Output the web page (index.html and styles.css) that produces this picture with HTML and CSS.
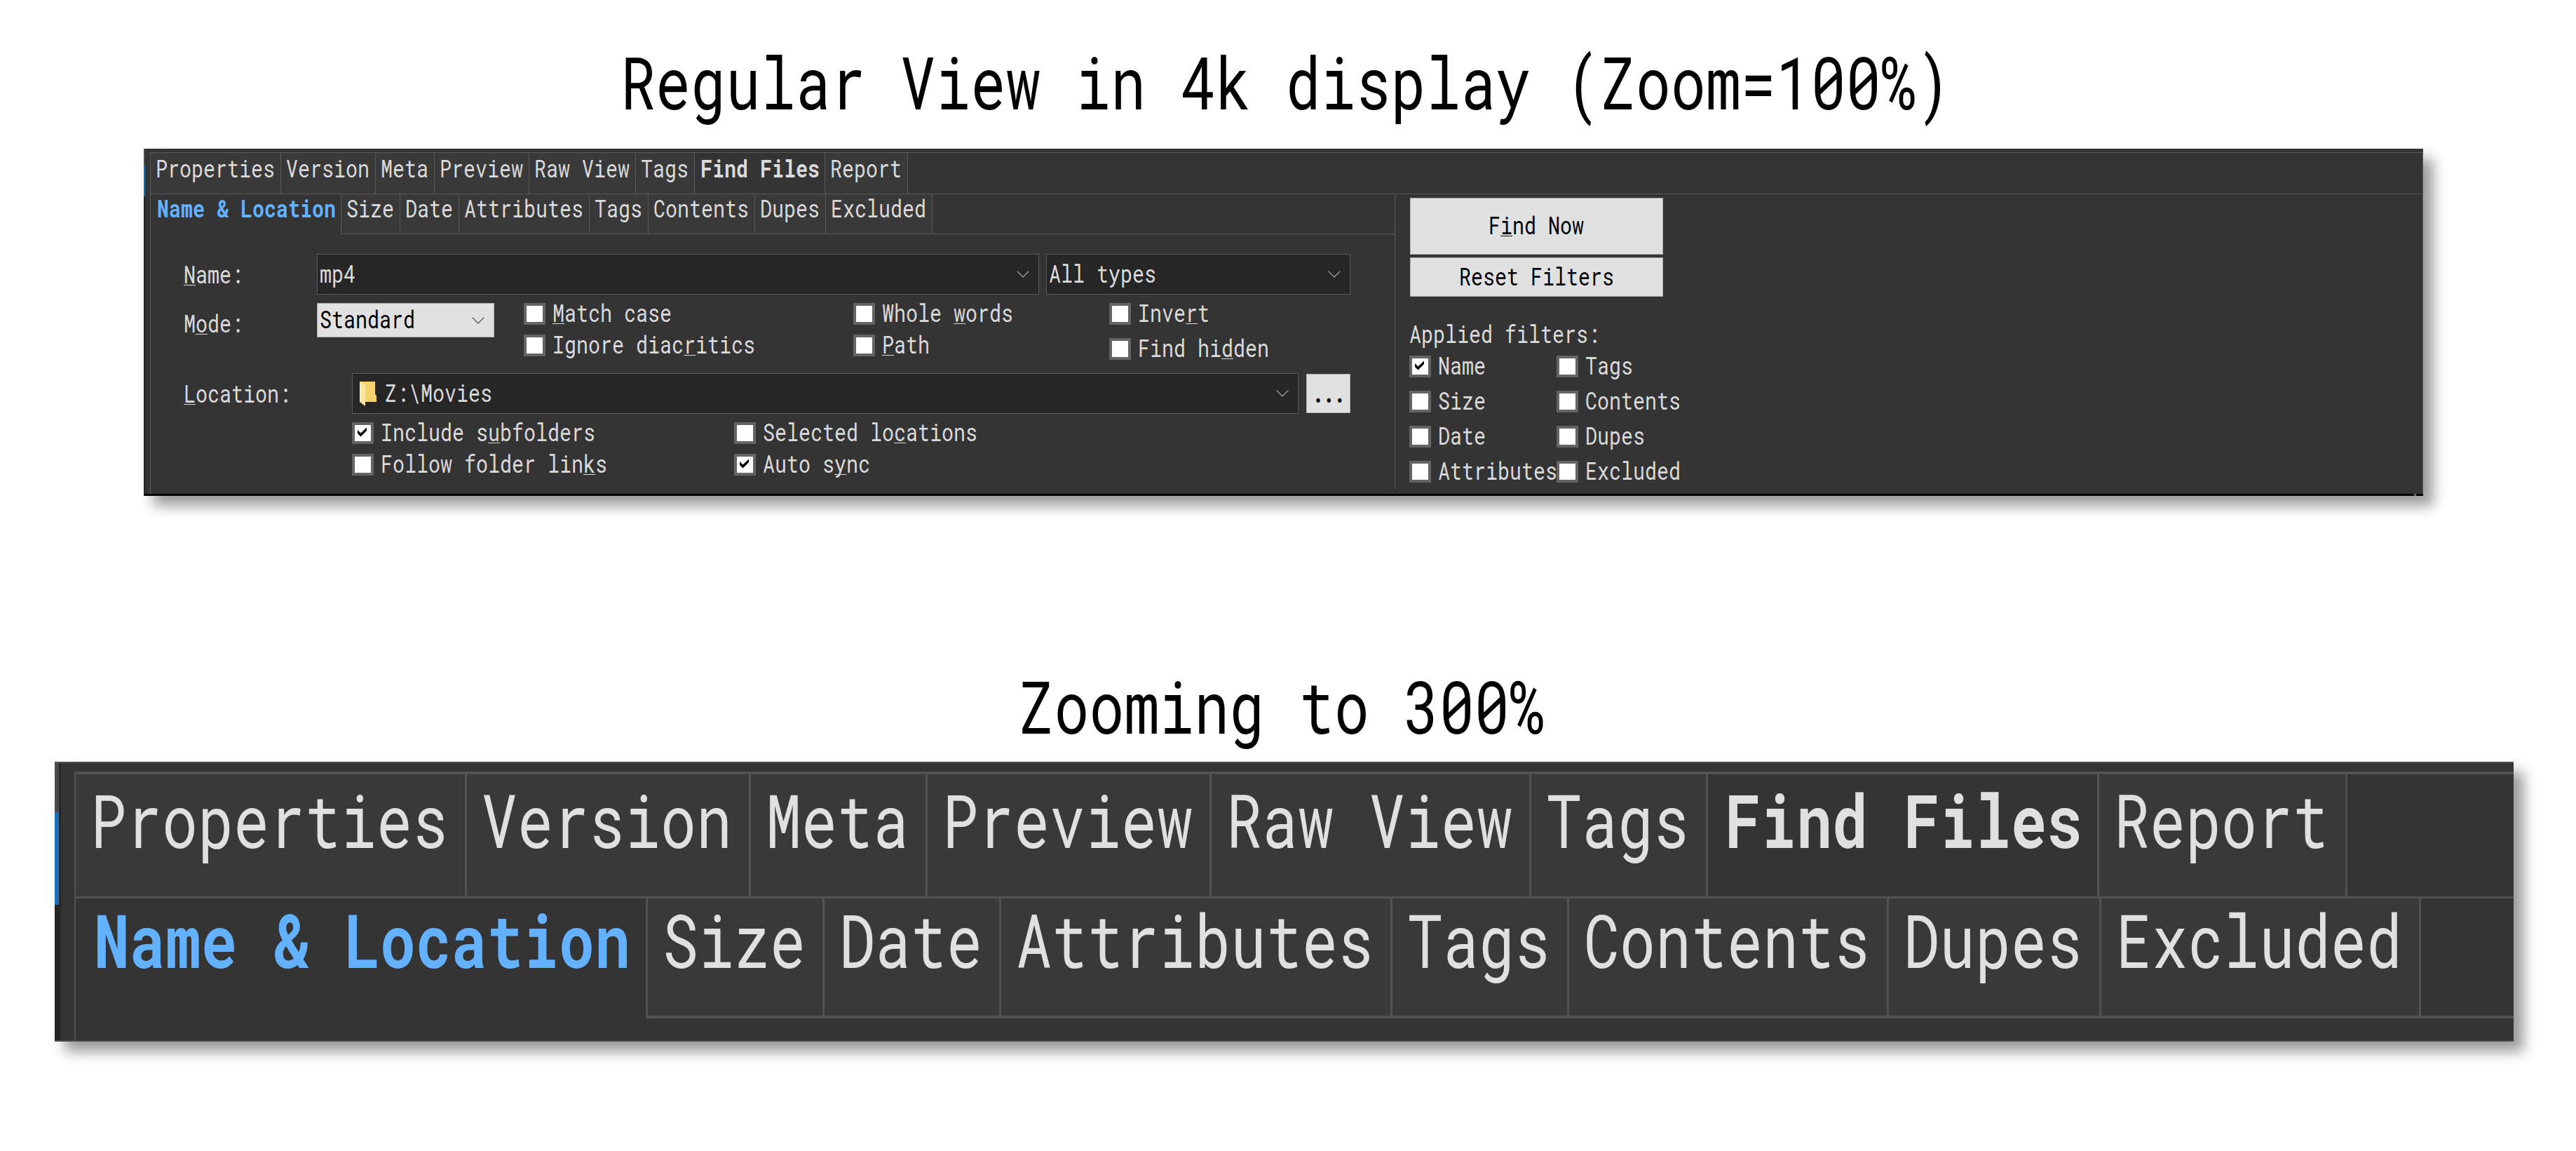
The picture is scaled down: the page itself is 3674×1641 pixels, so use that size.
FILE: index.html
```
<!DOCTYPE html>
<html lang="en">

<head>
    <meta charset="UTF-8">
    <meta name="viewport" content="width=device-width, initial-scale=1.0">
    <title>Find Files panel</title>
    <link rel="stylesheet" href="styles.css">
</head>

<body>

    <h1 class="title"><span class="title-text">Regular View in 4k display (Zoom=100%)</span></h1>

    <div class="window">
        <div class="edge"></div>
        <div class="main">
            <!-- top level tabs -->
            <div class="tabs tabs-main">
                <div class="tab"><span class="t">Properties</span></div>
                <div class="tab"><span class="t">Version</span></div>
                <div class="tab"><span class="t">Meta</span></div>
                <div class="tab"><span class="t">Preview</span></div>
                <div class="tab"><span class="t">Raw View</span></div>
                <div class="tab"><span class="t">Tags</span></div>
                <div class="tab current"><span class="t">Find Files</span></div>
                <div class="tab"><span class="t">Report</span></div>
            </div>

            <div class="content">
                <div class="criteria">
                    <!-- filter tabs -->
                    <div class="tabs tabs-sub">
                        <div class="tab selected"><span class="t">Name &amp; Location</span></div>
                        <div class="tab"><span class="t">Size</span></div>
                        <div class="tab"><span class="t">Date</span></div>
                        <div class="tab"><span class="t">Attributes</span></div>
                        <div class="tab"><span class="t">Tags</span></div>
                        <div class="tab"><span class="t">Contents</span></div>
                        <div class="tab"><span class="t">Dupes</span></div>
                        <div class="tab"><span class="t">Excluded</span></div>
                        <div class="tab-filler"></div>
                    </div>

                    <div class="form">
                        <div class="row">
                            <div class="label"><span class="t"><u>N</u>ame:</span></div>
                            <div class="field field-name">
                                <span class="t">mp4</span>
                                <svg class="chevron" viewBox="0 0 18 10"><path d="M.7.7 9 9 17.3.7" /></svg>
                            </div>
                            <div class="field field-types">
                                <span class="t">All types</span>
                                <svg class="chevron" viewBox="0 0 18 10"><path d="M.7.7 9 9 17.3.7" /></svg>
                            </div>
                        </div>

                        <div class="row row-mode">
                            <div class="label"><span class="t">M<u>o</u>de:</span></div>
                            <div class="field select">
                                <span class="t">Standard</span>
                                <svg class="chevron" viewBox="0 0 18 10"><path d="M.7.7 9 9 17.3.7" /></svg>
                            </div>
                            <div class="options">
                                <div class="stack">
                                    <div class="check"><span class="box"></span><span class="t"><u>M</u>atch case</span></div>
                                    <div class="check"><span class="box"></span><span class="t">Ignore diac<u>r</u>itics</span></div>
                                </div>
                                <div class="stack">
                                    <div class="check"><span class="box"></span><span class="t">Whole <u>w</u>ords</span></div>
                                    <div class="check"><span class="box"></span><span class="t"><u>P</u>ath</span></div>
                                </div>
                                <div class="stack stack-wide">
                                    <div class="check"><span class="box"></span><span class="t">Inve<u>r</u>t</span></div>
                                    <div class="check"><span class="box"></span><span class="t">Find hi<u>d</u>den</span></div>
                                </div>
                            </div>
                        </div>

                        <div class="row">
                            <div class="label label-location"><span class="t"><u>L</u>ocation:</span></div>
                            <div class="field field-location">
                                <svg class="folder" viewBox="0 0 24 35">
                                    <path d="M0 0h22v18l2 2v9H0z" fill="#f6d36c" />
                                    <path d="M0 0 8 5v30L0 29z" fill="#ffe7a2" />
                                </svg>
                                <span class="t">Z:\Movies</span>
                                <svg class="chevron" viewBox="0 0 18 10"><path d="M.7.7 9 9 17.3.7" /></svg>
                            </div>
                            <div class="button button-browse"><span class="t">...</span></div>
                        </div>

                        <div class="location-options">
                            <div class="check">
                                <span class="box"><svg viewBox="0 0 23 23"><path d="M4 7v5l4.500 4.500L17 8V3.500l-8.500 8z" /></svg></span>
                                <span class="t">Include s<u>u</u>bfolders</span>
                            </div>
                            <div class="check"><span class="box"></span><span class="t">Selected lo<u>c</u>ations</span></div>
                            <div class="check"><span class="box"></span><span class="t">Follow folder lin<u>k</u>s</span></div>
                            <div class="check">
                                <span class="box"><svg viewBox="0 0 23 23"><path d="M4 7v5l4.500 4.500L17 8V3.500l-8.500 8z" /></svg></span>
                                <span class="t">Auto s<u>y</u>nc</span>
                            </div>
                        </div>
                    </div>
                </div>

                <div class="side">
                    <div class="button button-find"><span class="t">F<u>i</u>nd Now</span></div>
                    <div class="button button-reset"><span class="t">Reset Filters</span></div>
                    <div class="side-label"><span class="t">Applied filters:</span></div>
                    <div class="filters">
                        <div class="check">
                            <span class="box"><svg viewBox="0 0 23 23"><path d="M4 7v5l4.500 4.500L17 8V3.500l-8.500 8z" /></svg></span>
                            <span class="t">Name</span>
                        </div>
                        <div class="check"><span class="box"></span><span class="t">Tags</span></div>
                        <div class="check"><span class="box"></span><span class="t">Size</span></div>
                        <div class="check"><span class="box"></span><span class="t">Contents</span></div>
                        <div class="check"><span class="box"></span><span class="t">Date</span></div>
                        <div class="check"><span class="box"></span><span class="t">Dupes</span></div>
                        <div class="check"><span class="box"></span><span class="t">Attributes</span></div>
                        <div class="check"><span class="box"></span><span class="t">Excluded</span></div>
                    </div>
                </div>
            </div>
        </div>
    </div>

    <h1 class="title title-zoomed"><span class="title-text">Zooming to 300%</span></h1>

    <div class="window zoomed">
        <div class="edge"></div>
        <div class="main">
            <div class="tabs tabs-main">
                <div class="tab"><span class="t">Properties</span></div>
                <div class="tab"><span class="t">Version</span></div>
                <div class="tab"><span class="t">Meta</span></div>
                <div class="tab"><span class="t">Preview</span></div>
                <div class="tab"><span class="t">Raw View</span></div>
                <div class="tab"><span class="t">Tags</span></div>
                <div class="tab current"><span class="t">Find Files</span></div>
                <div class="tab"><span class="t">Report</span></div>
            </div>
            <div class="tabs tabs-sub">
                <div class="tab selected"><span class="t">Name &amp; Location</span></div>
                <div class="tab"><span class="t">Size</span></div>
                <div class="tab"><span class="t">Date</span></div>
                <div class="tab"><span class="t">Attributes</span></div>
                <div class="tab"><span class="t">Tags</span></div>
                <div class="tab"><span class="t">Contents</span></div>
                <div class="tab"><span class="t">Dupes</span></div>
                <div class="tab"><span class="t">Excluded</span></div>
                <div class="tab-filler"></div>
            </div>
        </div>
    </div>

</body>

</html>
```
FILE: styles.css
```
* {
    box-sizing: border-box;
}

body {
    margin: 0;
    padding: 56px 0 0;
    min-height: 1641px;
    background: #ffffff;
    font-family: 'Roboto Mono', 'Liberation Mono', monospace;
    font-size: 35px;
    line-height: 36px;
    color: #dadada;
    display: flex;
    flex-direction: column;
}

/* narrow monospace: every cell is 17px wide */
.t {
    display: inline-block;
    flex: none;
    white-space: pre;
    transform: scaleX(0.8095);
    transform-origin: 0 50%;
}

u {
    text-decoration-thickness: 1px;
    text-underline-offset: 2px;
    text-decoration-skip-ink: none;
}

/* headings */
.title {
    margin: 0 6px 36px 0;
    font-size: 104px;
    line-height: 120px;
    font-weight: 420;
    color: #000000;
    text-align: center;
}

.title-zoomed {
    margin-top: 239px;
    margin-right: 18px;
    margin-bottom: 20px;
}

.title-text {
    display: inline-block;
    white-space: pre;
    transform: scaleX(0.8);
}

/* window */
.window {
    position: relative;
    width: 3251px;
    height: 495px;
    margin-left: 205px;
    display: flex;
    background: #343434;
    border-bottom: 3px solid #050505;
    box-shadow: 14px 14px 18px rgba(0, 0, 0, 0.4);
}

.window::after {
    content: "";
    position: absolute;
    right: 10px;
    bottom: -3px;
    width: 3px;
    height: 3px;
    background: #6a6a6a;
}

.edge {
    width: 2px;
    margin-right: 7px;
    background: linear-gradient(#4a4a4a 0 23px, #1a6fb8 23px 68px, #242424 68px);
}

.main {
    flex: 1;
    min-width: 0;
    margin-top: 5px;
    border: 1px solid #5a5a5a;
    border-bottom: none;
}

/* tabs */
.tabs {
    display: grid;
}

.tabs-main {
    height: 59px;
    grid-template-columns: 186px 135px 84px 135px 152px 84px 186px 118px;
    border-bottom: 1px solid #5a5a5a;
}

.tabs-sub {
    height: 57px;
    grid-template-columns: 272px 84px 84px 186px 84px 152px 101px 152px 1fr;
}

.tab {
    padding: 3px 0 0 7px;
    background: #393939;
    border-right: 1px solid #5a5a5a;
}

.tabs-sub .tab {
    padding-top: 1px;
    border-bottom: 1px solid #5a5a5a;
}

.tab-filler {
    border-bottom: 1px solid #5a5a5a;
}

.current {
    padding-left: 8px;
    background: #343434;
    font-weight: 700;
}

.tabs-sub .selected {
    padding-left: 9px;
    background: #343434;
    border-bottom: none;
    font-weight: 700;
    color: #63b1ff;
}

/* search criteria */
.content {
    height: 420px;
    display: flex;
}

.criteria {
    width: 1775px;
    border-right: 1px solid #5a5a5a;
}

.form {
    padding: 28px 0 0 47px;
    display: flex;
    flex-direction: column;
    gap: 12px;
}

.row {
    display: flex;
    align-items: center;
}

.row-mode {
    height: 88px;
    align-items: flex-start;
}

.label {
    width: 190px;
    margin-bottom: 2px;
}

.row-mode .label {
    padding-top: 10px;
}

.label-location {
    width: 240px;
}

.field {
    height: 58px;
    padding: 0 13px 0 3px;
    display: flex;
    align-items: center;
    background: #262626;
    border: 1px solid #5a5a5a;
}

.field .t {
    margin-bottom: 5px;
}

.field-name {
    width: 1030px;
    margin-right: 10px;
}

.field-types {
    width: 434px;
}

.field-location {
    width: 1350px;
    margin-right: 11px;
    padding-left: 10px;
}

.select {
    width: 253px;
    height: 49px;
    background: #e1e1e1;
    border-color: #adadad;
    color: #000000;
}

.chevron {
    width: 18px;
    height: 10px;
    margin-left: auto;
    fill: none;
    stroke: #b0b0b0;
    stroke-width: 1.2;
}

.select .chevron {
    stroke: #444444;
}

.folder {
    width: 24px;
    height: 35px;
    margin-right: 12px;
}

.options {
    margin-left: 42px;
    display: grid;
    grid-template-columns: 470px 365px 300px;
}

.stack {
    display: flex;
    flex-direction: column;
    gap: 14px;
}

.stack-wide {
    gap: 19px;
}

.check {
    height: 31px;
    display: flex;
    align-items: center;
    gap: 10px;
}

.check .t {
    margin-bottom: 5px;
}

.box {
    flex: none;
    width: 31px;
    height: 31px;
    display: block;
    background: #ffffff;
    border: 4px solid #646464;
}

.box svg {
    display: block;
    fill: #000000;
}

.location-options {
    padding-left: 240px;
    display: grid;
    grid-template-columns: 545px 545px;
    row-gap: 14px;
}

/* buttons and applied filters */
.side {
    padding: 5px 0 0 21px;
}

.button {
    display: flex;
    align-items: center;
    justify-content: center;
    background: #e1e1e1;
    border: 1px solid #adadad;
    color: #000000;
}

.button .t {
    margin-bottom: 5px;
    transform-origin: 50% 50%;
}

.button-find {
    width: 361px;
    height: 81px;
    margin-bottom: 4px;
}

.button-reset {
    width: 361px;
    height: 56px;
}

.button-browse {
    width: 63px;
    height: 56px;
}

.button-browse .t {
    margin-bottom: 2px;
    font-weight: 700;
    letter-spacing: -2px;
}

.side-label {
    margin: 34px 0 14px;
}

.side-label .t {
    margin-left: -1px;
}

.filters {
    margin-left: -1px;
    display: grid;
    grid-template-columns: 210px 210px;
    row-gap: 19px;
}

/* the same panel at 300% */
.zoomed {
    width: 3507px;
    height: 399px;
    margin-left: 78px;
    border-top: 2px solid #4e4e4e;
    border-bottom: 2px solid #484848;
    font-size: 105px;
    line-height: 110px;
    font-weight: 420;
    color: #e0e0e0;
}

.zoomed::after {
    display: none;
}

.zoomed .edge {
    width: 9px;
    margin-right: 19px;
    border-right: 3px solid #282828;
    background: linear-gradient(#4a4a4a 0 70px, #1a6fb8 70px 202px, #242424 202px);
}

.zoomed .main {
    margin-top: 12px;
    border: solid #525252;
    border-width: 4px 0 0 2px;
}

.zoomed .tabs-main {
    height: 177px;
    grid-template-columns: 558px 405px 252px 405px 456px 252px 558px 354px;
    border-bottom: 3px solid #525252;
}

.zoomed .tabs-sub {
    height: 171px;
    grid-template-columns: 816px 252px 252px 558px 252px 456px 303px 456px 1fr;
}

.zoomed .tab {
    padding: 9px 0 0 21px;
    border-right: 3px solid #525252;
}

.zoomed .tabs-sub .tab {
    padding-top: 3px;
    border-bottom: 4px solid #525252;
}

.zoomed .tab-filler {
    border-bottom: 4px solid #525252;
}

.zoomed .current {
    padding-left: 24px;
}

.zoomed .tabs-sub .selected {
    padding-left: 26px;
    border-bottom: none;
}
```
